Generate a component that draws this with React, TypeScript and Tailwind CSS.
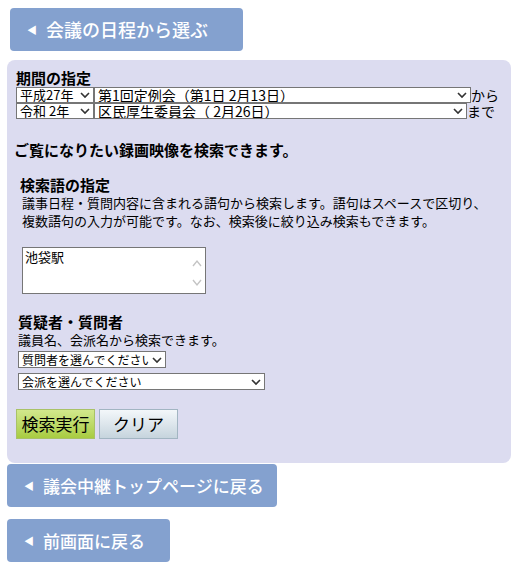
// 会議録画映像の検索フォーム

const jp = { fontFamily: '"Noto Sans CJK JP", "Liberation Sans", sans-serif' }

function Chevron({ className = "" }: { className?: string }) {
  return (
    <svg width="10" height="7" viewBox="0 0 10 7" className={className}>
      <path d="M1 1.5 L5 5.5 L9 1.5" fill="none" stroke="#333" strokeWidth="1.6" />
    </svg>
  )
}

function FakeSelect({ w, label, h = 16, size = "text-[14px]" }: { w: string; label: string; h?: number; size?: string }) {
  return (
    <div className={`relative ${w}`}>
      <select
        className={`block w-full appearance-none bg-white border border-[#767676] rounded-none pl-[3px] pr-4 ${size} leading-[14px] text-black outline-none`}
        style={{ ...jp, height: h }}
        defaultValue={label}
      >
        <option>{label}</option>
      </select>
      <Chevron className="absolute right-[4px] top-1/2 -translate-y-1/2 pointer-events-none" />
    </div>
  )
}

function NavButton({ label, w, size }: { label: string; w: string; size: string }) {
  return (
    <a
      href="#"
      className={`flex items-center h-[43px] ${w} rounded-[4px] bg-[#84a1cf] text-white ${size} font-medium pl-[17px]`}
      style={jp}
    >
      <span className="text-[10px] mr-[9px]">◀</span>
      {label}
    </a>
  )
}

export default function App() {
  return (
    <div className="w-[517px] min-h-[570px] bg-white pt-[8px] text-black" style={jp}>
      <div className="ml-[10px]">
        <NavButton label="会議の日程から選ぶ" w="w-[233px]" size="text-[18px]" />
      </div>

      {/* 検索パネル */}
      <div className="ml-[7px] mt-[9px] w-[504px] h-[403px] rounded-[8px] bg-[#dcdcf0] pt-[9px] pl-[9px]">
        <div className="text-[15px] leading-[18px] font-bold">期間の指定</div>
        <div className="flex items-end">
          <FakeSelect w="w-[78px]" label="平成27年" size="text-[13px]" />
          <FakeSelect w="w-[377px]" label="第1回定例会（第1日 2月13日）" />
          <span className="text-[14px] leading-[16px]">から</span>
        </div>
        <div className="flex items-end">
          <FakeSelect w="w-[78px]" label={"令和\u00a02年"} size="text-[13px]" />
          <FakeSelect w="w-[373px]" label={"区民厚生委員会（\u00a02月26日）"} />
          <span className="text-[14px] leading-[16px]">まで</span>
        </div>

        <div className="mt-[22px] -ml-[2px] text-[15px] leading-[18px] font-bold">ご覧になりたい録画映像を検索できます。</div>

        <div className="mt-[17px] ml-[4px] text-[15px] leading-[18px] font-bold">検索語の指定</div>
        <div className="ml-[6px] text-[13px] leading-[18px]">
          議事日程・質問内容に含まれる語句から検索します。語句はスペースで区切り、
          <br />
          複数語句の入力が可能です。なお、検索後に絞り込み検索もできます。
        </div>
        <div className="relative mt-[17px] ml-[6px] w-[184px] h-[47px] bg-white border border-[#767676]">
          <textarea
            className="w-full h-full resize-none overflow-hidden px-[2px] py-[1px] text-[13px] leading-[16px] outline-none"
            style={jp}
            defaultValue="池袋駅"
          />
          <svg width="10" height="30" viewBox="0 0 10 30" className="absolute right-[3px] top-[10px] pointer-events-none">
            <path d="M1 8 L5 3 L9 8" fill="none" stroke="#c4c4c4" strokeWidth="1.4" />
            <path d="M1 22 L5 27 L9 22" fill="none" stroke="#c4c4c4" strokeWidth="1.4" />
          </svg>
        </div>

        <div className="mt-[19px] ml-[2px] text-[15px] leading-[18px] font-bold">質疑者・質問者</div>
        <div className="ml-[2px] text-[13px] leading-[17px]">議員名、会派名から検索できます。</div>
        <div className="ml-[2px] mt-[3px] flex flex-col gap-[5px]">
          <FakeSelect w="w-[148px]" label="質問者を選んでください" h={17} size="text-[12px]" />
          <FakeSelect w="w-[247px]" label="会派を選んでください" h={17} size="text-[12px]" />
        </div>

        <div className="mt-[19px] flex gap-[4px]">
          <button
            className="h-[30px] w-[79px] border border-[#a9c267] bg-gradient-to-b from-[#d2e88c] to-[#a8cc3f] text-[17px]"
            style={jp}
          >
            検索実行
          </button>
          <button
            className="h-[30px] w-[79px] border border-[#a2b5c2] bg-gradient-to-b from-[#f3f7fa] via-[#dde6ec] to-[#c6d4dd] text-[17px]"
            style={jp}
          >
            クリア
          </button>
        </div>
      </div>

      <div className="ml-[7px] mt-[1px]">
        <NavButton label="議会中継トップページに戻る" w="w-[270px]" size="text-[17px]" />
      </div>
      <div className="ml-[7px] mt-[12px]">
        <NavButton label="前画面に戻る" w="w-[163px]" size="text-[17px]" />
      </div>
    </div>
  )
}
